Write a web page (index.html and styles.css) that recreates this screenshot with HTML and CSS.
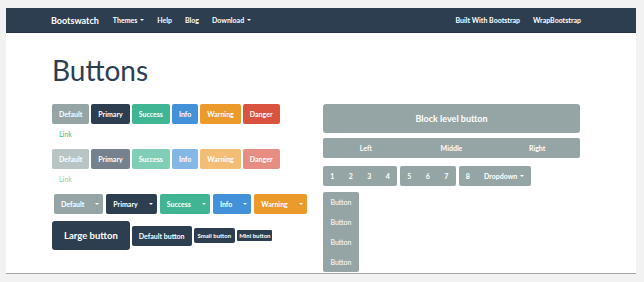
FILE: index.html
```html
<!DOCTYPE html>
<html lang="en">
<head>
    <meta charset="UTF-8">
    <meta name="viewport" content="width=device-width, initial-scale=1.0">
    <title>Bootswatch - Buttons</title>
    <link rel="stylesheet" href="styles.css">
</head>
<body>
    <div class="window">
        <nav class="navbar">
            <div class="nav-inner">
                <a class="brand" href="#">Bootswatch</a>
                <a class="nav-link" href="#">Themes <span class="caret"></span></a>
                <a class="nav-link" href="#">Help</a>
                <a class="nav-link" href="#">Blog</a>
                <a class="nav-link" href="#">Download <span class="caret"></span></a>
                <a class="nav-link push" href="#">Built With Bootstrap</a>
                <a class="nav-link" href="#">WrapBootstrap</a>
            </div>
        </nav>
        <div class="content">
            <h1>Buttons</h1>
            <div class="columns">
                <div class="col">
                    <div class="btn-row">
                        <a class="btn btn-default" href="#">Default</a>
                        <a class="btn btn-primary" href="#">Primary</a>
                        <a class="btn btn-success" href="#">Success</a>
                        <a class="btn btn-info" href="#">Info</a>
                        <a class="btn btn-warning" href="#">Warning</a>
                        <a class="btn btn-danger" href="#">Danger</a>
                        <a class="btn btn-link" href="#">Link</a>
                    </div>
                    <div class="btn-row disabled">
                        <a class="btn btn-default" href="#">Default</a>
                        <a class="btn btn-primary" href="#">Primary</a>
                        <a class="btn btn-success" href="#">Success</a>
                        <a class="btn btn-info" href="#">Info</a>
                        <a class="btn btn-warning" href="#">Warning</a>
                        <a class="btn btn-danger" href="#">Danger</a>
                        <a class="btn btn-link" href="#">Link</a>
                    </div>
                    <div class="split-row">
                        <div class="btn-group">
                            <a class="btn btn-default" href="#">Default</a>
                            <a class="btn btn-default toggle" href="#"><span class="caret"></span></a>
                        </div>
                        <div class="btn-group">
                            <a class="btn btn-primary" href="#">Primary</a>
                            <a class="btn btn-primary toggle" href="#"><span class="caret"></span></a>
                        </div>
                        <div class="btn-group">
                            <a class="btn btn-success" href="#">Success</a>
                            <a class="btn btn-success toggle" href="#"><span class="caret"></span></a>
                        </div>
                        <div class="btn-group">
                            <a class="btn btn-info" href="#">Info</a>
                            <a class="btn btn-info toggle" href="#"><span class="caret"></span></a>
                        </div>
                        <div class="btn-group">
                            <a class="btn btn-warning" href="#">Warning</a>
                            <a class="btn btn-warning toggle" href="#"><span class="caret"></span></a>
                        </div>
                    </div>
                    <div class="size-row">
                        <a class="btn btn-primary btn-lg" href="#">Large button</a>
                        <a class="btn btn-primary" href="#">Default button</a>
                        <a class="btn btn-primary btn-sm" href="#">Small button</a>
                        <a class="btn btn-primary btn-xs" href="#">Mini button</a>
                    </div>
                </div>
                <div class="col">
                    <a class="btn btn-default btn-block" href="#">Block level button</a>
                    <div class="btn-justified">
                        <a class="btn btn-default" href="#">Left</a>
                        <a class="btn btn-default" href="#">Middle</a>
                        <a class="btn btn-default" href="#">Right</a>
                    </div>
                    <div class="toolbar">
                        <div class="btn-group">
                            <a class="btn btn-default num" href="#">1</a>
                            <a class="btn btn-default num" href="#">2</a>
                            <a class="btn btn-default num" href="#">3</a>
                            <a class="btn btn-default num" href="#">4</a>
                        </div>
                        <div class="btn-group">
                            <a class="btn btn-default num" href="#">5</a>
                            <a class="btn btn-default num" href="#">6</a>
                            <a class="btn btn-default num" href="#">7</a>
                        </div>
                        <div class="btn-group">
                            <a class="btn btn-default num" href="#">8</a>
                            <a class="btn btn-default" href="#">Dropdown <span class="caret"></span></a>
                        </div>
                    </div>
                    <div class="btn-vertical">
                        <a class="btn btn-default" href="#">Button</a>
                        <a class="btn btn-default" href="#">Button</a>
                        <a class="btn btn-default" href="#">Button</a>
                        <a class="btn btn-default" href="#">Button</a>
                    </div>
                </div>
            </div>
        </div>
    </div>
</body>
</html>
```

FILE: styles.css
```css
body {
    margin: 0;
    padding: 8px 0 0 6px;
    background-color: #f2f2f2;
    font-family: Lato, 'Open Sans', sans-serif;
    color: #2c3e50;
}
a {
    text-decoration: none;
}
.window {
    width: 630px;
    height: 265px;
    background-color: #fff;
    border-bottom: 1px solid #a3a3a3;
    overflow: hidden;
}
.navbar {
    height: 25px;
    background-color: #2c3e50;
    border-bottom: 1px solid #253444;
    box-sizing: border-box;
}
.nav-inner {
    display: flex;
    align-items: center;
    gap: 13px;
    height: 100%;
    padding: 0 55px 0 45px;
}
.brand {
    color: #fff;
    font-weight: 700;
    font-size: 9px;
    margin-right: 1px;
}
.nav-link {
    color: #fff;
    font-weight: 700;
    font-size: 7px;
    display: flex;
    align-items: center;
    gap: 3px;
}
.nav-link.push {
    margin-left: auto;
}
.caret {
    display: inline-block;
    width: 0;
    height: 0;
    border-top: 2px solid currentColor;
    border-left: 2px solid transparent;
    border-right: 2px solid transparent;
}
.content {
    padding: 21px 55px 0 46px;
}
h1 {
    margin: 0 0 18px;
    font-size: 28px;
    line-height: 32px;
    font-weight: 400;
    color: #2c3e50;
}
.columns {
    display: grid;
    grid-template-columns: 257px 257px;
    column-gap: 14px;
}
.col {
    display: flex;
    flex-direction: column;
    align-items: flex-start;
}

/* buttons */
.btn {
    display: inline-flex;
    align-items: center;
    justify-content: center;
    gap: 3px;
    height: 20px;
    padding: 0 7px;
    box-sizing: border-box;
    font-size: 7px;
    font-weight: 700;
    color: #fff;
    border-radius: 2px;
    white-space: nowrap;
}
.btn-default { background-color: #95a5a6; }
.btn-primary { background-color: #2c3e50; }
.btn-success { background-color: #3fb593; }
.btn-info { background-color: #4391d8; }
.btn-warning { background-color: #ec9a2b; }
.btn-danger { background-color: #d9533e; }
.btn-link {
    color: #3fb593;
    font-weight: 400;
    background: none;
}
.btn-row {
    display: flex;
    flex-wrap: wrap;
    gap: 0 2px;
    width: 240px;
    margin-bottom: 5px;
}
.btn-row .btn-link {
    margin-left: 0;
}
.disabled {
    opacity: 0.65;
}
.split-row {
    display: flex;
    gap: 3px;
    padding-left: 2px;
    margin-bottom: 7px;
}
.btn-group {
    display: flex;
}
.btn-group .btn {
    border-radius: 0;
}
.btn-group .btn:first-child {
    border-top-left-radius: 2px;
    border-bottom-left-radius: 2px;
}
.btn-group .btn:last-child {
    border-top-right-radius: 2px;
    border-bottom-right-radius: 2px;
}
.toggle {
    width: 12px;
    padding: 0;
}
.size-row {
    display: flex;
    align-items: center;
    gap: 2px;
}
.btn-lg {
    height: 29px;
    padding: 0 12px;
    font-size: 9.5px;
    border-radius: 3px;
}
.btn-sm {
    height: 15px;
    padding: 0 4px;
    font-size: 6px;
}
.btn-xs {
    height: 11px;
    padding: 0 2px;
    font-size: 6px;
    border-radius: 1px;
}
.btn-block {
    width: 100%;
    height: 29px;
    font-size: 9px;
    border-radius: 3px;
    margin-bottom: 5px;
}
.btn-justified {
    display: grid;
    grid-template-columns: 1fr 1fr 1fr;
    width: 100%;
    margin-bottom: 8px;
}
.btn-justified .btn {
    border-radius: 0;
}
.btn-justified .btn:first-child {
    border-radius: 2px 0 0 2px;
}
.btn-justified .btn:last-child {
    border-radius: 0 2px 2px 0;
}
.toolbar {
    display: flex;
    gap: 3px;
    margin-bottom: 6px;
}
.num {
    width: 18.5px;
    padding: 0;
}
.btn-vertical {
    display: flex;
    flex-direction: column;
    width: 36px;
    border-radius: 2px;
    overflow: hidden;
}
.btn-vertical .btn {
    border-radius: 0;
    font-weight: 400;
}
```
